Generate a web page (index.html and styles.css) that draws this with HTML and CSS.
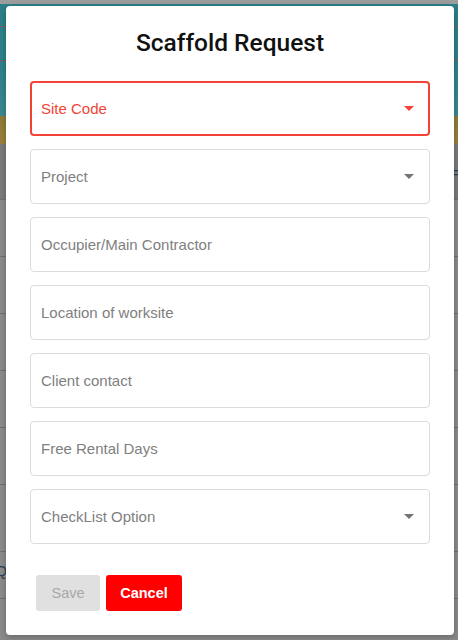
FILE: index.html
```html
<!DOCTYPE html>
<html>
<head>
<meta charset="utf-8">
<link rel="stylesheet" href="styles.css">
</head>
<body>
<div class="page">
  <div class="topbar"></div>
  <div class="hero">
    <div class="hero-line l1"></div>
    <div class="hero-line l2"></div>
  </div>
  <div class="strip"></div>
  <div class="table">
    <div class="row head"><span class="glyph right">=</span></div>
    <div class="row"></div>
    <div class="row"></div>
    <div class="row"></div>
    <div class="row"></div>
    <div class="row"></div>
    <div class="row tall"></div>
    <div class="row short"><span class="glyph left">Q</span></div>
  </div>
</div>

<div class="modal">
  <h1 class="title">Scaffold Request</h1>
  <div class="fields">
    <div class="field select error"><span class="label">Site Code</span><span class="caret"></span></div>
    <div class="field select"><span class="label">Project</span><span class="caret"></span></div>
    <div class="field"><span class="label">Occupier/Main Contractor</span></div>
    <div class="field"><span class="label">Location of worksite</span></div>
    <div class="field"><span class="label">Client contact</span></div>
    <div class="field"><span class="label">Free Rental Days</span></div>
    <div class="field select"><span class="label">CheckList Option</span><span class="caret"></span></div>
  </div>
  <div class="actions">
    <button class="btn save">Save</button>
    <button class="btn cancel">Cancel</button>
  </div>
</div>
</body>
</html>
```
FILE: styles.css
```css
html, body {
  margin: 0;
  padding: 0;
}
body {
  width: 458px;
  height: 640px;
  overflow: hidden;
  background: #8a8a8a;
  font-family: "Liberation Sans", Arial, sans-serif;
  position: relative;
}
.page {
  display: flex;
  flex-direction: column;
}
.topbar {
  height: 4px;
  background: #9c9c9c;
}
.hero {
  height: 112px;
  background: linear-gradient(180deg, #2b7f88 0%, #2e828b 60%, #3a8990 100%);
  display: flex;
  flex-direction: column;
}
.hero-line {
  height: 1px;
  background: #7e5a5a;
}
.hero-line.l1 { margin-top: 22px; }
.hero-line.l2 { margin-top: 33px; }
.strip {
  height: 28px;
  background: linear-gradient(180deg, #8f7a38 0%, #9a8040 100%);
}
.table {
  display: flex;
  flex-direction: column;
}
.row {
  height: 56px;
  border-bottom: 1px solid #707070;
  position: relative;
  background: #8b8b8b;
}
.row.head {
  height: 55px;
  background: #7b7b7b;
}
.row.tall { height: 66px; }
.row.short { height: 46px; }
.glyph {
  position: absolute;
  font-size: 14px;
  color: #2c3e50;
}
.glyph.right { right: -3px; top: 21px; }
.glyph.left { left: -4px; top: 11px; }

.modal {
  position: absolute;
  left: 6px;
  top: 6px;
  width: 448px;
  height: 629px;
  box-sizing: border-box;
  background: #fff;
  border-radius: 4px;
  padding: 23px 24px 0 24px;
  box-shadow: 0 2px 6px rgba(0,0,0,0.25);
}
.title {
  margin: 0;
  text-align: center;
  font-family: Roboto, "Liberation Sans", sans-serif;
  font-weight: 500;
  font-size: 24.5px;
  line-height: 28px;
  color: #111;
}
.fields {
  margin-top: 24px;
  display: flex;
  flex-direction: column;
  gap: 13px;
}
.field {
  height: 55px;
  box-sizing: border-box;
  border: 1px solid #dcdcdc;
  border-radius: 4px;
  display: flex;
  align-items: center;
  justify-content: space-between;
  padding: 0 15px 0 10px;
}
.field.error {
  border: 2px solid #f44336;
  padding: 0 14px 0 9px;
}
.label {
  font-size: 15px;
  color: #808080;
}
.field.error .label { color: #f44336; }
.caret {
  width: 0;
  height: 0;
  border-left: 5px solid transparent;
  border-right: 5px solid transparent;
  border-top: 5px solid #757575;
}
.field.error .caret { border-top-color: #f44336; }
.actions {
  margin-top: 31px;
  padding-left: 6px;
  display: flex;
  gap: 6px;
}
.btn {
  height: 36px;
  border: none;
  border-radius: 3px;
  font-family: "Liberation Sans", Arial, sans-serif;
  font-size: 14.5px;
  padding: 0;
}
.btn.save {
  width: 64px;
  background: #e0e0e0;
  color: #a8a8a8;
}
.btn.cancel {
  width: 76px;
  background: #ff0000;
  color: #fff;
  font-weight: bold;
}
```
